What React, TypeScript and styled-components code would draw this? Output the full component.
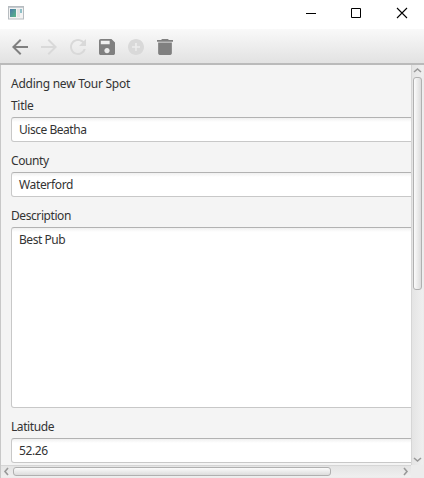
import React from 'react';
import styled, { createGlobalStyle } from 'styled-components';

const GlobalStyle = createGlobalStyle`
  * { box-sizing: border-box; }
  body { margin: 0; background: #fff; overflow: hidden; }
`;

const Window = styled.div`
  width: 424px;
  height: 478px;
  display: flex;
  flex-direction: column;
  overflow: hidden;
  background: #f4f4f4;
  color: #333;
  font: 12px/16px 'Noto Sans', 'Open Sans', sans-serif;
`;

const TitleBar = styled.header`
  flex: none;
  height: 29px;
  padding: 6px 14px 0 8px;
  display: flex;
  justify-content: space-between;
  background: #fff;
  svg { display: block; }
`;

const WindowControls = styled.div`
  display: flex;
  gap: 30px;
`;

const ToolBar = styled.nav`
  flex: none;
  height: 36px;
  padding: 10px 12px 0;
  display: flex;
  gap: 13px;
  background: linear-gradient(#f9f9f9, #e2e2e2);
  border-bottom: 2px solid #bababa;
`;

const ToolButton = styled.button<{ $disabled?: boolean }>`
  width: 16px;
  height: 16px;
  padding: 0;
  border: 0;
  background: none;
  color: ${(p) => (p.$disabled ? '#d9d9d9' : '#808080')};
  svg { display: block; }
`;

const ScrollPane = styled.main`
  flex: 1;
  min-height: 0;
  display: grid;
  grid-template-columns: 410px 12px;
  grid-template-rows: 400px 12px;
  border: solid #c8c8c8;
  border-width: 0 0 0 1px;
  background: #ececec;
`;

const Viewport = styled.div`
  overflow: hidden;
  background: #f4f4f4;
  padding: 11px 0 0 10px;
`;

const Form = styled.form`
  width: 480px;
  display: flex;
  flex-direction: column;
`;

const Heading = styled.div`
  height: 16px;
  margin-bottom: 6px;
  letter-spacing: -0.25px;
  white-space: nowrap;
`;

const Field = styled.label`
  display: flex;
  flex-direction: column;
  gap: 3px;
  margin-bottom: 11px;
`;

const Caption = styled.span<{ $tracking: number }>`
  height: 16px;
  letter-spacing: ${(p) => p.$tracking}px;
`;

const Box = styled.div<{ $height: number; $tracking: number }>`
  height: ${(p) => p.$height}px;
  padding: 4px 7px;
  border: 1px solid #c8c8c8;
  border-top-color: #b2b2b2;
  border-radius: 3px;
  background: linear-gradient(#f0f0f0, #fff 4px);
  letter-spacing: ${(p) => p.$tracking}px;
`;

const VerticalBar = styled.div`
  display: flex;
  flex-direction: column;
  align-items: center;
  justify-content: space-between;
  border-left: 1px solid #d6d6d6;
  background: linear-gradient(90deg, #e4e4e4, #efefef);
  svg { display: block; flex: none; }
`;

const VerticalThumb = styled.div`
  width: 9px;
  height: 213px;
  margin-bottom: auto;
  border: 1px solid #b0b0b0;
  border-radius: 3px;
  background: linear-gradient(90deg, #fbfbfb, #dcdcdc);
`;

const HorizontalBar = styled.div`
  display: flex;
  align-items: center;
  justify-content: space-between;
  border-top: 1px solid #d6d6d6;
  background: linear-gradient(#e4e4e4, #efefef);
  svg { display: block; flex: none; }
`;

const HorizontalThumb = styled.div`
  width: 318px;
  height: 9px;
  margin-right: auto;
  border: 1px solid #b0b0b0;
  border-radius: 3px;
  background: linear-gradient(#fbfbfb, #dcdcdc);
`;

const tools = [
  { name: 'Back', box: '4 4 16 16', d: 'M20 11H7.83l5.59-5.59L12 4l-8 8 8 8 1.41-1.41L7.83 13H20v-2z' },
  { name: 'Forward', box: '4 4 16 16', disabled: true, d: 'M12 4l-1.41 1.41L16.17 11H4v2h12.17l-5.58 5.59L12 20l8-8z' },
  { name: 'Refresh', box: '4 4 16 16', disabled: true, d: 'M17.65 6.35C16.2 4.9 14.21 4 12 4c-4.42 0-7.99 3.58-7.99 8s3.57 8 7.99 8c3.73 0 6.84-2.55 7.73-6h-2.08c-.82 2.33-3.04 4-5.65 4-3.31 0-6-2.69-6-6s2.69-6 6-6c1.66 0 3.14.69 4.22 1.78L13 11h7V4l-2.35 2.35z' },
  { name: 'Save', box: '3 3 18 18', d: 'M17 3H5c-1.11 0-2 .9-2 2v14c0 1.1.89 2 2 2h14c1.1 0 2-.9 2-2V7l-4-4zm-5 16c-1.66 0-3-1.34-3-3s1.34-3 3-3 3 1.34 3 3-1.34 3-3 3zm3-10H5V5h10v4z' },
  { name: 'Add', box: '2 2 20 20', disabled: true, d: 'M12 2C6.48 2 2 6.48 2 12s4.48 10 10 10 10-4.48 10-10S17.52 2 12 2zm5 11h-4v4h-2v-4H7v-2h4V7h2v4h4v2z' },
  { name: 'Delete', box: '5 3 14 18', d: 'M6 19c0 1.1.9 2 2 2h8c1.1 0 2-.9 2-2V7H6v12zM19 4h-3.5l-1-1h-5l-1 1H5v2h14V4z' },
];

const fields = [
  { label: 'Title', value: 'Uisce Beatha', height: 25, lt: -0.3, vt: -0.47 },
  { label: 'County', value: 'Waterford', height: 25, lt: -0.4, vt: -0.35 },
  { label: 'Description', value: 'Best Pub', height: 181, lt: -0.42, vt: -0.45 },
  { label: 'Latitude', value: '52.26', height: 25, lt: -0.42, vt: -0.4 },
];

const Chevron = ({ w, h, d }: { w: number; h: number; d: string }) => (
  <svg width={w} height={h} viewBox={`0 0 ${w} ${h}`} fill="none" stroke="#999" strokeWidth="1.6">
    <path d={d} />
  </svg>
);

export default function App() {
  return (
    <>
      <GlobalStyle />
      <Window>
        <TitleBar>
          <svg width="16" height="14" viewBox="0 0 16 14">
            <defs>
              <linearGradient id="pane" x1="0" y1="0" x2="1" y2="1">
                <stop offset="0" stopColor="#4a78a8" />
                <stop offset="1" stopColor="#59b786" />
              </linearGradient>
            </defs>
            <rect x="0.5" y="0.5" width="15" height="12.5" fill="#f3f3f3" stroke="#b7bcc0" />
            <rect x="1" y="1" width="14" height="1" fill="#c5cbd0" />
            <rect x="2" y="3" width="6" height="8" fill="url(#pane)" />
            <rect x="9" y="3" width="3" height="8" fill="#e3e3e3" />
            <rect x="12" y="3" width="2" height="4" fill="#8fc0c8" />
          </svg>
          <WindowControls>
            <svg width="16" height="16" viewBox="0 0 16 16"><path d="M4 7.5h10" stroke="#000" /></svg>
            <svg width="16" height="16" viewBox="0 0 16 16"><path d="M3.5 2.5h9v9h-9z" fill="none" stroke="#000" /></svg>
            <svg width="16" height="16" viewBox="0 0 16 16"><path d="M3 2l10 10M13 2L3 12" stroke="#000" strokeWidth="1.1" /></svg>
          </WindowControls>
        </TitleBar>
        <ToolBar>
          {tools.map((t) => (
            <ToolButton key={t.name} type="button" aria-label={t.name} $disabled={t.disabled}>
              <svg width="16" height="16" viewBox={t.box} preserveAspectRatio="none" fill="currentColor">
                <path d={t.d} />
              </svg>
            </ToolButton>
          ))}
        </ToolBar>
        <ScrollPane>
          <Viewport>
            <Form>
              <Heading>Adding new Tour Spot</Heading>
              {fields.map((f) => (
                <Field key={f.label}>
                  <Caption $tracking={f.lt}>{f.label}</Caption>
                  <Box $height={f.height} $tracking={f.vt}>{f.value}</Box>
                </Field>
              ))}
            </Form>
          </Viewport>
          <VerticalBar>
            <Chevron w={11} h={12} d="M2 7l3.5-3L9 7" />
            <VerticalThumb />
            <Chevron w={11} h={10} d="M2 3l3.5 3L9 3" />
          </VerticalBar>
          <HorizontalBar>
            <Chevron w={12} h={11} d="M7 2L4 5.5L7 9" />
            <HorizontalThumb />
            <Chevron w={10} h={11} d="M3 2l3 3.5L3 9" />
          </HorizontalBar>
        </ScrollPane>
      </Window>
    </>
  );
}
